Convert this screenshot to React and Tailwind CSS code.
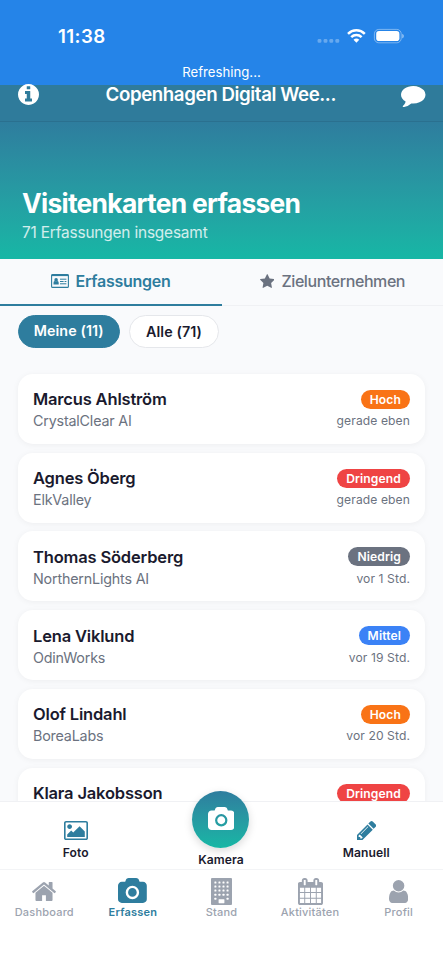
import React, { useState } from 'react';

const ICONS = {
  info: {
    box: '128 128 1536 1536',
    d: 'M1152 1376v-160q0-14-9-23t-23-9h-96v-512q0-14-9-23t-23-9h-320q-14 0-23 9t-9 23v160q0 14 9 23t23 9h96v320h-96q-14 0-23 9t-9 23v160q0 14 9 23t23 9h448q14 0 23-9t9-23zm-128-896v-160q0-14-9-23t-23-9h-192q-14 0-23 9t-9 23v160q0 14 9 23t23 9h192q14 0 23-9t9-23zm640 416q0 209-103 385.5t-279.5 279.5-385.5 103-385.5-103-279.5-279.5-103-385.5 103-385.5 279.5-279.5 385.5-103 385.5 103 279.5 279.5 103 385.5z',
  },
  comment: {
    box: '0 256 1792 1536',
    d: 'M1792 896q0 174-120 321.5t-326 233-450 85.5q-70 0-145-8-198 175-460 242-49 14-114 22-17 2-30.5-9t-17.5-29v-1q-3-4-.5-12t2-10 4.5-9.5l6-9 7-8.5 8-9q7-8 31-34.5t34.5-38 31-39.5 32.5-51 27-59 26-76q-157-89-247.5-220t-90.5-281q0-130 71-248.5t191-204.5 286-136.5 348-50.5q244 0 450 85.5t326 233 120 321.5z',
  },
  star: {
    box: '64 32 1664 1587',
    d: 'M1728 647q0 22-26 48l-363 354 86 500q1 7 1 20 0 21-10.5 35.5t-30.5 14.5q-19 0-40-12l-449-236-449 236q-22 12-40 12-21 0-31.5-14.5t-10.5-35.5q0-6 2-20l86-500-364-354q-25-27-25-48 0-37 56-46l502-73 225-455q19-41 49-41t49 41l225 455 502 73q56 9 56 46z',
  },
  image: {
    box: '-64 128 1920 1536',
    d: 'M576 576q0 80-56 136t-136 56-136-56-56-136 56-136 136-56 136 56 56 136zm1024 384v448h-1408v-192l320-320 160 160 512-512zm96-704h-1600q-13 0-22.5 9.5t-9.5 22.5v1216q0 13 9.5 22.5t22.5 9.5h1600q13 0 22.5-9.5t9.5-22.5v-1216q0-13-9.5-22.5t-22.5-9.5zm160 32v1216q0 66-47 113t-113 47h-1600q-66 0-113-47t-47-113v-1216q0-66 47-113t113-47h1600q66 0 113 47t47 113z',
  },
  camera: {
    box: '-64 0 1920 1664',
    d: 'M896 672q119 0 203.5 84.5t84.5 203.5-84.5 203.5-203.5 84.5-203.5-84.5-84.5-203.5 84.5-203.5 203.5-84.5zm704-416q106 0 181 75t75 181v896q0 106-75 181t-181 75h-1408q-106 0-181-75t-75-181v-896q0-106 75-181t181-75h224l51-136q19-49 69.5-84.5t103.5-35.5h512q53 0 103.5 35.5t69.5 84.5l51 136h224zm-704 1152q185 0 316.5-131.5t131.5-316.5-131.5-316.5-316.5-131.5-316.5 131.5-131.5 316.5 131.5 316.5 316.5 131.5z',
  },
  pencil: {
    box: '128 149 1515 1515',
    d: 'M491 1536l91-91-235-235-91 91v107h128v128h107zM1014 608q0-22-22-22-10 0-17 7l-542 542q-7 7-7 17 0 22 22 22 10 0 17-7l542-542q7-7 7-17zM960 416l416 416-832 832h-416v-416zM1643 512q0 53-37 90l-166 166-416-416 166-165q36-38 90-38 53 0 91 38l235 234q37 39 37 91z',
  },
  home: {
    box: '89 253 1614 1283',
    d: 'M1472 992v480q0 26-19 45t-45 19h-384v-384h-256v384h-384q-26 0-45-19t-19-45v-480q0-1 .5-3t.5-3l575-474 575 474q1 2 1 6zm223-69l-62 74q-8 9-21 11h-3q-13 0-21-7l-692-577-692 577q-12 8-24 7-13-2-21-11l-62-74q-8-10-7-23.5t11-21.5l719-599q32-26 76-26t76 26l244 204v-195q0-14 9-23t23-9h192q14 0 23 9t9 23v408l219 182q10 8 11 21.5t-7 23.5z',
  },
  calendar: {
    box: '64 0 1664 1792',
    d: 'M192 1664h288v-288h-288v288zm352 0h320v-288h-320v288zm-352-352h288v-320h-288v320zm352 0h320v-320h-320v320zm-352-384h288v-288h-288v288zm736 736h320v-288h-320v288zm-384-736h320v-288h-320v288zm768 736h288v-288h-288v288zm-384-352h320v-320h-320v320zm-352-864v-288q0-13-9.5-22.5t-22.5-9.5h-64q-13 0-22.5 9.5t-9.5 22.5v288q0 13 9.5 22.5t22.5 9.5h64q13 0 22.5-9.5t9.5-22.5zm736 864h288v-320h-288v320zm-384-384h320v-288h-320v288zm384 0h288v-288h-288v288zm32-480v-288q0-13-9.5-22.5t-22.5-9.5h-64q-13 0-22.5 9.5t-9.5 22.5v288q0 13 9.5 22.5t22.5 9.5h64q13 0 22.5-9.5t9.5-22.5zm384-64v1280q0 52-38 90t-90 38h-1408q-52 0-90-38t-38-90v-1280q0-52 38-90t90-38h128v-96q0-66 47-113t113-47h64q66 0 113 47t47 113v96h384v-96q0-66 47-113t113-47h64q66 0 113 47t47 113v96h128q52 0 90 38t38 90z',
  },
  user: {
    box: '256 128 1280 1536',
    d: 'M1536 1399q0 109-62.5 187t-150.5 78h-854q-88 0-150.5-78t-62.5-187q0-85 8.5-160.5t31.5-152 58.5-131 94-89 134.5-34.5q131 128 313 128t313-128q76 0 134.5 34.5t94 89 58.5 131 31.5 152 8.5 160.5zm-256-887q0 159-112.5 271.5t-271.5 112.5-271.5-112.5-112.5-271.5 112.5-271.5 271.5-112.5 271.5 112.5 112.5 271.5z',
  },
};

function Icon({ name, className }) {
  const icon = ICONS[name];
  return (
    <svg viewBox={icon.box} className={className} fill="currentColor" aria-hidden="true">
      <path d={icon.d} />
    </svg>
  );
}

function BuildingIcon({ className }) {
  const windows = [];
  for (let row = 0; row < 5; row++) {
    for (let col = 0; col < 4; col++) {
      if (row === 4 && (col === 1 || col === 2)) continue;
      windows.push(<rect key={`${row}-${col}`} x={3.4 + col * 4.05} y={3.4 + row * 4.1} width="2" height="2" rx="0.5" fill="#fff" />);
    }
  }
  return (
    <svg viewBox="0 0 21 27" className={className} aria-hidden="true">
      <rect width="21" height="27" rx="1" fill="currentColor" />
      {windows}
      <rect x="7.6" y="21.2" width="5.8" height="4" rx="0.4" fill="#fff" />
    </svg>
  );
}

function CardIcon({ className }) {
  return (
    <svg viewBox="0 0 18 14" className={className} aria-hidden="true">
      <rect x="0.6" y="0.6" width="16.8" height="12.8" rx="1" fill="none" stroke="currentColor" strokeWidth="1.1" />
      <path d="M0.5 0.5h17v1.6h-17z" fill="currentColor" />
      <circle cx="5.1" cy="5.9" r="1.8" fill="currentColor" />
      <path d="M2.5 10.4V8.8q0-1.7 1.3-1.7 1.3.9 2.6 0 1.3 0 1.3 1.7v1.6z" fill="currentColor" />
      <path d="M9 5.2h6.4M9 7.5h3.6M13.6 7.5h1.8M9 9.8h6.4" stroke="currentColor" />
    </svg>
  );
}

function StatusIcons() {
  return (
    <svg viewBox="0 0 88 16" className="h-4 w-[88px]" fill="#fff" aria-hidden="true">
      <g opacity="0.3">
        <rect x="0.6" y="11" width="3.8" height="3.8" rx="1.2" />
        <rect x="6.6" y="11" width="3.8" height="3.8" rx="1.2" />
        <rect x="12.4" y="11" width="3.8" height="3.8" rx="1.2" />
        <rect x="18.4" y="11" width="3.8" height="3.8" rx="1.2" />
      </g>
      <g fill="none" stroke="#fff" strokeWidth="2.5">
        <path d="M31 5.8a12 12 0 0 1 16.8 0" />
        <path d="M34.2 9.2a7.4 7.4 0 0 1 10.4 0" />
      </g>
      <path d="M36.5 11.8a4.2 4.2 0 0 1 5.8 0L39.4 14.8z" />
      <rect x="57.4" y="1.4" width="26.8" height="13.4" rx="4.4" fill="none" stroke="#fff" strokeOpacity="0.4" />
      <rect x="59.2" y="3.1" width="23.2" height="10" rx="2.8" />
      <path d="M85.2 5.8q1.7.6 1.7 2.3t-1.7 2.3z" opacity="0.5" />
    </svg>
  );
}

const PRIORITY_STYLES = {
  Hoch: 'bg-[#f97316]',
  Dringend: 'bg-[#ef4444]',
  Niedrig: 'bg-[#6b7280]',
  Mittel: 'bg-[#3b82f6]',
};

const CONTACTS = [
  { name: 'Marcus Ahlström', company: 'CrystalClear AI', priority: 'Hoch', time: 'gerade eben' },
  { name: 'Agnes Öberg', company: 'ElkValley', priority: 'Dringend', time: 'gerade eben' },
  { name: 'Thomas Söderberg', company: 'NorthernLights AI', priority: 'Niedrig', time: 'vor 1 Std.' },
  { name: 'Lena Viklund', company: 'OdinWorks', priority: 'Mittel', time: 'vor 19 Std.' },
  { name: 'Olof Lindahl', company: 'BoreaLabs', priority: 'Hoch', time: 'vor 20 Std.' },
  { name: 'Klara Jakobsson', priority: 'Dringend' },
];

function ContactCard({ contact }) {
  return (
    <div className="flex h-[69.8px] shrink-0 justify-between rounded-[15px] bg-white px-[15.3px] pt-[15.3px] shadow-[0_1px_6px_rgba(0,0,0,0.05)]">
      <div>
        <div className="text-[16.5px] leading-[21px] font-semibold tracking-[-0.17px] text-[#1a1a2e]">{contact.name}</div>
        {contact.company && (
          <div className="text-[14.3px] leading-[21px] tracking-[-0.18px] text-[#6b7280]">{contact.company}</div>
        )}
      </div>
      <div className="flex flex-col items-end pt-[0.7px]">
        <span className={`rounded-full px-[9px] text-[12.1px] leading-[19px] font-semibold tracking-[0.12px] text-white ${PRIORITY_STYLES[contact.priority]}`}>
          {contact.priority}
        </span>
        {contact.time && (
          <span className="mt-[2.5px] text-[12.1px] leading-[19px] tracking-[0.1px] text-[#6b7280]">{contact.time}</span>
        )}
      </div>
    </div>
  );
}

function NavItem({ label, active, children, onClick }) {
  return (
    <button
      onClick={onClick}
      className={`flex flex-1 flex-col items-center pt-[7px] ${active ? 'font-semibold text-[#2e7d9e]' : 'font-medium text-[#9ca3af]'}`}
    >
      <span className="flex h-[28px] items-center justify-center">{children}</span>
      <span className="text-[11px] leading-[14px] tracking-[0.2px]">{label}</span>
    </button>
  );
}

export default function App() {
  const [filter, setFilter] = useState('meine');
  const [tab, setTab] = useState('Erfassen');

  const chipStyle = (id) =>
    filter === id
      ? 'border-[#2e7d9e] bg-[#2e7d9e] pb-[1px] text-white'
      : 'border-[#e5e7eb] bg-white text-[#1a1a2e]';

  return (
    <div className="flex h-[960px] w-[443px] flex-col overflow-hidden bg-[#f9fafc] font-['Inter',sans-serif]">
      <div className="flex h-[85px] shrink-0 flex-col bg-[#2584e8] text-white">
        <div className="flex h-[62px] items-start justify-between pt-[24px] pr-[38px] pl-[58px]">
          <span className="pt-[1px] text-[18.7px] leading-6 font-semibold tracking-[0.4px]">11:38</span>
          <span className="pt-1">
            <StatusIcons />
          </span>
        </div>
        <div className="text-center text-[13.2px] leading-5">Refreshing...</div>
      </div>

      <header className="flex h-[37px] shrink-0 justify-between border-b border-[#2a708f] bg-[#2f7b9b] px-[17.5px] text-white">
        <Icon name="info" className="-mt-[1px] h-[21px] w-[21px]" />
        <h1 className="-mt-[2px] pl-[2px] text-[18.7px] leading-6 font-semibold tracking-[-0.4px]">Copenhagen Digital Wee...</h1>
        <Icon name="comment" className="mt-[0.5px] h-[21px] w-[24.5px]" />
      </header>

      <section className="flex h-[137px] shrink-0 flex-col bg-linear-to-b from-[#2e7d9e] to-[#16b7a5] px-[22px] pt-[65px] text-white">
        <h2 className="text-[26.4px] leading-8 font-bold tracking-[-0.72px]">Visitenkarten erfassen</h2>
        <p className="text-[15.4px] leading-[27px] tracking-[-0.17px] text-white/80">71 Erfassungen insgesamt</p>
      </section>

      <nav className="flex h-[47px] shrink-0 border-b border-[#f0f1f4] text-[16px]">
        <button className="-mb-px flex flex-1 items-center justify-center gap-[7px] border-b-2 border-[#2e7d9e] pr-[1px] pb-[1px] font-semibold tracking-[-0.27px] text-[#2e7d9e]">
          <CardIcon className="h-[14px] w-[18px]" />
          Erfassungen
        </button>
        <button className="flex flex-1 items-center justify-center gap-[7px] pb-[2px] font-medium tracking-[-0.42px] text-[#6b7280]">
          <Icon name="star" className="-mt-[1px] h-[14px] w-[14.5px]" />
          Zielunternehmen
        </button>
      </nav>

      <div className="flex shrink-0 gap-[9px] px-[17.5px] pt-[9px] text-[14.3px] font-semibold">
        <button onClick={() => setFilter('meine')} className={`h-[33px] w-[102.5px] rounded-full border tracking-[0.1px] ${chipStyle('meine')}`}>
          Meine (11)
        </button>
        <button onClick={() => setFilter('alle')} className={`h-[33px] w-[90px] rounded-full border tracking-[0.1px] ${chipStyle('alle')}`}>
          Alle (71)
        </button>
      </div>

      <main className="flex min-h-0 flex-1 flex-col gap-[8.95px] overflow-hidden px-[17.7px] pt-[26px]">
        {CONTACTS.map((contact) => (
          <ContactCard key={contact.name} contact={contact} />
        ))}
      </main>

      <div className="relative flex h-[68px] shrink-0 border-t border-[#f0f1f4] bg-white px-[3px] text-[12.1px] font-semibold text-[#1a1a2e]">
        <button className="flex flex-1 flex-col items-center pt-[19px]">
          <Icon name="image" className="h-[19.2px] w-6 text-[#2e7d9e]" />
          <span className="mt-[5px] leading-4 tracking-[0.1px]">Foto</span>
        </button>
        <button className="flex flex-1 flex-col items-center">
          <span className="-mt-[11.5px] flex h-[57px] w-[57px] shrink-0 items-center justify-center rounded-full bg-linear-to-b from-[#2e7d9e] to-[#16b7a5] text-white shadow-[0_3px_8px_rgba(0,0,0,0.15)]">
            <Icon name="camera" className="mb-[2px] h-[23px] w-[26.5px]" />
          </span>
          <span className="mt-[4.5px] leading-4 tracking-[0.1px]">Kamera</span>
        </button>
        <button className="flex flex-1 flex-col items-center pt-[19px] pr-[1px]">
          <Icon name="pencil" className="h-[19.2px] w-[19.2px] text-[#2e7d9e]" />
          <span className="mt-[5px] leading-4 tracking-[0.1px]">Manuell</span>
        </button>
      </div>

      <nav className="flex h-[91px] shrink-0 items-start border-t border-[#f3f4f6] bg-white">
        <NavItem label="Dashboard" active={tab === 'Dashboard'} onClick={() => setTab('Dashboard')}>
          <Icon name="home" className="h-[19px] w-6" />
        </NavItem>
        <NavItem label="Erfassen" active={tab === 'Erfassen'} onClick={() => setTab('Erfassen')}>
          <Icon name="camera" className="mb-[2px] h-[25px] w-[28.8px]" />
        </NavItem>
        <NavItem label="Stand" active={tab === 'Stand'} onClick={() => setTab('Stand')}>
          <BuildingIcon className="h-[27px] w-[21px]" />
        </NavItem>
        <NavItem label="Aktivitäten" active={tab === 'Aktivitäten'} onClick={() => setTab('Aktivitäten')}>
          <Icon name="calendar" className="h-[27px] w-[25px]" />
        </NavItem>
        <NavItem label="Profil" active={tab === 'Profil'} onClick={() => setTab('Profil')}>
          <Icon name="user" className="h-[23px] w-[19.2px]" />
        </NavItem>
      </nav>
    </div>
  );
}
